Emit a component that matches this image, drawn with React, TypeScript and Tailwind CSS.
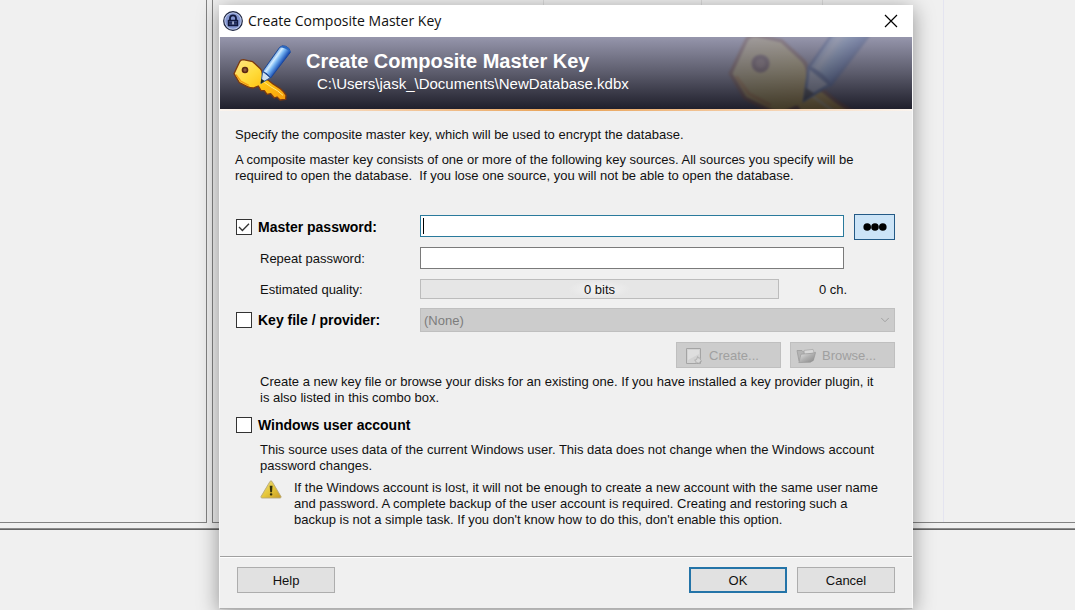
import { useId, useState } from "react";
import type { ReactNode } from "react";
import clsx from "clsx";
import { ChevronDown } from "lucide-react";

const buttonBase =
  "flex h-[26px] items-center justify-center border pt-px text-[13px] leading-4";

function KeyArt({ className }: { className?: string }) {
  const id = useId();
  return (
    <svg viewBox="96 126 180 180" className={className} aria-hidden="true">
      <defs>
        <linearGradient id={`${id}-gold`} x1="0" y1="0" x2="1" y2="1">
          <stop offset="0" stopColor="#ffe488" />
          <stop offset="0.35" stopColor="#ffdc3c" />
          <stop offset="0.6" stopColor="#ffc414" />
          <stop offset="1" stopColor="#f59a0a" />
        </linearGradient>
        <linearGradient
          id={`${id}-pen`}
          gradientUnits="userSpaceOnUse"
          x1="212"
          y1="176"
          x2="240"
          y2="196"
        >
          <stop offset="0" stopColor="#4f8fdc" />
          <stop offset="0.3" stopColor="#d4edff" />
          <stop offset="0.55" stopColor="#7ab8f4" />
          <stop offset="1" stopColor="#1c50b4" />
        </linearGradient>
      </defs>
      <path
        d="M102 221 L119 185 Q122 179 130 179 L158 185 L181 206 Q187 212 187 221 L189 236 L204 240 L219 252 L241 266 Q254 276 258 286 L257 298 L240 300 L231 291 L223 294 L212 281 L201 283 L193 272 L183 272 L175 258 L160 264 Q150 264 142 260 L118 248 Z"
        fill={`url(#${id}-gold)`}
        stroke="#7c3a10"
        strokeWidth="4"
        strokeLinejoin="round"
      />
      <path
        d="M192 246 L212 260 L232 272 L249 286"
        fill="none"
        stroke="#ffe880"
        strokeWidth="3"
      />
      <path d="M108 224 L122 243 L146 256" fill="none" stroke="#f29a12" strokeWidth="4" />
      <circle cx="135" cy="210" r="7.5" fill="#8c5a3c" stroke="#5a2812" strokeWidth="5" />
      <path d="M183 250 L188 214 L211 233 Z" fill="#cfe0ee" stroke="#2c5a9c" strokeWidth="3" />
      <path d="M182 251 L184 236 L194 243 Z" fill="#20281c" />
      <path
        d="M188 214 L239 142 Q246 134 258 139 Q271 145 271 157 L212 234 Q203 220 188 214 Z"
        fill={`url(#${id}-pen)`}
        stroke="#1d4796"
        strokeWidth="3"
        strokeLinejoin="round"
      />
      <path d="M239 142 Q246 134 258 139 Q271 145 271 157 Q258 143 239 142 Z" fill="#2c68c0" />
    </svg>
  );
}

function LockIcon() {
  return (
    <svg viewBox="0 0 20 20" className="size-5" aria-hidden="true">
      <circle cx="10" cy="10" r="9.3" fill="#c4d0f0" stroke="#1d2540" strokeWidth="1.2" />
      <circle cx="10" cy="10" r="7.8" fill="#8496d0" />
      <path d="M7 9.5V7.3a3 3 0 0 1 6 0v2.2" fill="none" stroke="#10183c" strokeWidth="1.8" />
      <rect x="4.8" y="8.8" width="10.4" height="6.4" rx="0.6" fill="#10183c" />
      <path d="M6 10.8h8M6 13h8" stroke="#5c70b2" strokeWidth="0.7" />
      <rect x="9.4" y="10.4" width="1.3" height="3" fill="#d8e0f8" />
    </svg>
  );
}

function WarningIcon() {
  return (
    <svg viewBox="0 0 22 19" className="h-[19px] w-[22px] shrink-0" aria-hidden="true">
      <defs>
        <linearGradient id="warn" x1="0" y1="0" x2="1" y2="1">
          <stop offset="0" stopColor="#e8dc8c" />
          <stop offset="0.5" stopColor="#e6c83c" />
          <stop offset="1" stopColor="#c89a20" />
        </linearGradient>
      </defs>
      <path
        d="M10 1.4Q11 0.2 12 1.4L21 16.6Q21.4 18 20 18H2Q0.6 18 1 16.6Z"
        fill="url(#warn)"
        stroke="#b8a878"
        strokeWidth="0.9"
      />
      <path d="M9.7 5.8h2.8l-.5 6.4h-1.8z" fill="#33300c" />
      <rect x="9.9" y="13.2" width="2.4" height="2.4" rx="0.8" fill="#33300c" />
    </svg>
  );
}

function NewFileIcon() {
  return (
    <svg viewBox="0 0 18 18" className="size-[18px]" aria-hidden="true">
      <path d="M1.5 1.5h14v15h-14z" fill="#d2d2d2" stroke="#a4a4a4" />
      <path d="M3 3h11v4L3 13z" fill="#dedede" />
      <path
        d="M12.6 9.6l1.1 1.6 2-.3-.4 1.9 1.5 1.3-1.9.7-.4 1.9-1.7-1-1.8.8.1-2-1.5-1.3 2-.6z"
        fill="#d8d8d8"
        stroke="#a6a6a6"
        strokeWidth="0.8"
      />
    </svg>
  );
}

function FolderIcon() {
  return (
    <svg viewBox="0 0 20 16" className="h-4 w-5" aria-hidden="true">
      <defs>
        <linearGradient id="folder" x1="0" y1="0" x2="1" y2="1">
          <stop offset="0.1" stopColor="#dcdcdc" />
          <stop offset="0.5" stopColor="#b0b0b0" />
          <stop offset="1" stopColor="#868686" />
        </linearGradient>
      </defs>
      <path d="M1 2.5h5l1 1.3h10V12l-14 1z" fill="#b4b4b4" stroke="#9c9c9c" strokeWidth="0.8" />
      <path d="M8 2.4l9-1 1.4 4-10 1z" fill="#d8d8d8" stroke="#a0a0a0" strokeWidth="0.6" />
      <path
        d="M5 6.2L15 5.4 19.6 4.4 17.4 12.4 14.4 14.2 2.8 14.6z"
        fill="url(#folder)"
        stroke="#949494"
        strokeWidth="0.6"
      />
    </svg>
  );
}

type SourceCheckboxProps = {
  id: string;
  children: ReactNode;
  defaultChecked?: boolean;
};

function SourceCheckbox({ id, children, defaultChecked = false }: SourceCheckboxProps) {
  const [checked, setChecked] = useState(defaultChecked);
  return (
    <label htmlFor={id} className="ml-px flex items-center gap-1.5 font-bold text-black">
      <span className="relative flex size-4">
        <input
          id={id}
          type="checkbox"
          checked={checked}
          onChange={(e) => setChecked(e.target.checked)}
          className="size-4 appearance-none border border-[#333333] bg-white"
        />
        {checked && (
          <svg viewBox="0 0 16 16" className="pointer-events-none absolute inset-0 size-4">
            <path d="M3 8l3.4 3.5L13 4.8" fill="none" stroke="#333" strokeWidth="1.3" />
          </svg>
        )}
      </span>
      <span className="text-[14px] leading-4">{children}</span>
    </label>
  );
}

/* The database window behind the dialog */
function MainWindow() {
  return (
    <div className="flex min-h-screen flex-col bg-[#f0f0f0]">
      <div className="flex h-[523px] gap-[5px]">
        <div className="w-[207px] border-r border-b border-[#828282]" />
        <div className="flex flex-1 border-b border-l border-[#828282]">
          <div className="w-[331px] border-r border-[#dcdcdc]" />
          <div className="w-[158px] border-r border-[#dcdcdc]" />
          <div className="w-[121px] border-r border-[#dcdcdc]" />
          <div className="w-[121px] border-r border-[#e4e4f0]" />
        </div>
      </div>
      <div className="mt-[5px] h-0.5 border-t border-b border-t-[#8c8c8c] border-b-[#646464]" />
    </div>
  );
}

export default function App() {
  return (
    <div className="relative overflow-hidden font-['Liberation_Sans',Arial,sans-serif] text-[13px] leading-4 text-[#111]">
      <MainWindow />
      <div className="absolute inset-0 pt-[5px] pr-[162px] pl-[219px]">
        <section
          role="dialog"
          aria-labelledby="dialog-title"
          className="border-x border-b border-x-[#f8f8f8] border-b-[#b0b0b0] bg-[#f0f0f0] shadow-[0_4px_20px_rgba(0,0,0,0.4)]"
        >
          <header className="-mx-px flex h-8 items-center gap-[5px] bg-white pr-3.5 pl-1">
            <LockIcon />
            <h1
              id="dialog-title"
              className="flex-1 font-['Open_Sans','Segoe_UI',sans-serif] text-[14px] leading-5"
            >
              Create Composite Master Key
            </h1>
            <button type="button" aria-label="Close" className="flex size-4 items-center justify-center">
              <svg viewBox="0 0 14 14" className="size-3.5">
                <path d="M1 1l12 12M13 1L1 13" stroke="#000" strokeWidth="1.2" />
              </svg>
            </button>
          </header>

          <div className="relative flex h-[72px] gap-3.5 overflow-hidden bg-linear-to-b from-[#9696ac] via-[#5c5c6c] to-[#20202c] pt-[5px] pl-3 text-white">
            <KeyArt className="absolute -top-[50px] right-[23px] size-[164px] opacity-20 blur-[1px] brightness-80" />
            <KeyArt className="size-[60px]" />
            <div className="pt-[7px]">
              <h2 className="text-[20px] leading-6 font-bold">Create Composite Master Key</h2>
              <p className="ml-[11px] text-[15px] leading-[22px]">
                C:\Users\jask_\Documents\NewDatabase.kdbx
              </p>
            </div>
          </div>
          <div className="h-0.5 bg-linear-to-r from-[#fbf4ee] via-[#e8a050] to-[#fbf4ee]" />

          <form onSubmit={(e) => e.preventDefault()}>
            <div className="pt-4 pr-[17px] pb-7 pl-[15px]">
              <p>
                Specify the composite master key, which will be used to encrypt the database.
              </p>
              <p className="mt-[9px]">
                A composite master key consists of one or more of the following key sources.
                All sources you specify will be
                <br />
                required to open the database.&nbsp; If you lose one source, you will not be able
                to open the database.
              </p>

              <div className="mt-[30px] flex">
                <div className="flex w-[185px] items-center">
                  <SourceCheckbox id="use-password" defaultChecked>
                    Master password:
                  </SourceCheckbox>
                </div>
                <div className="relative mr-2.5 flex-1 pt-px">
                  <input
                    type="password"
                    aria-label="Master password"
                    className="h-[22px] w-full border border-[#2a7a9c] bg-white px-1 outline-none"
                  />
                  <span className="absolute top-1 left-[3px] h-4 w-px bg-black" />
                </div>
                <button
                  type="button"
                  aria-label="Show password"
                  className="flex h-[26px] w-[41px] items-center justify-center border border-[#245a86] bg-[#cce4f7]"
                >
                  <svg viewBox="0 0 24 8" className="h-2 w-6">
                    <circle cx="4.2" cy="4" r="3.8" />
                    <circle cx="12" cy="4" r="3.8" />
                    <circle cx="19.8" cy="4" r="3.8" />
                  </svg>
                </button>
              </div>

              <div className="mt-[7px] flex items-center">
                <label htmlFor="repeat" className="w-[185px] pt-0.5 pl-[25px]">
                  Repeat password:
                </label>
                <input
                  id="repeat"
                  type="password"
                  className="mr-[51px] h-[22px] flex-1 border border-[#7a7a7a] bg-white px-1"
                />
              </div>

              <div className="mt-2.5 flex items-center">
                <span id="quality" className="w-[185px] pt-0.5 pl-[25px]">
                  Estimated quality:
                </span>
                <div
                  role="progressbar"
                  aria-labelledby="quality"
                  aria-valuenow={0}
                  className="flex h-5 flex-1 items-center justify-center border border-[#bcbcbc] bg-[#e6e6e6]"
                >
                  <span className="bg-radial from-[#f4f4f4] to-[#e6e6e6] to-70% px-4 pt-0.5">
                    0 bits
                  </span>
                </div>
                <span className="w-[116px] pt-0.5 pl-10">0 ch.</span>
              </div>

              <div className="mt-[9px] flex">
                <div className="flex w-[185px] items-center">
                  <SourceCheckbox id="use-keyfile">Key file / provider:</SourceCheckbox>
                </div>
                <div className="relative flex-1">
                  <select
                    disabled
                    aria-label="Key file / provider"
                    className="block h-6 w-full appearance-none border border-[#bfbfbf] bg-[#cccccc] px-[3px] pt-0.5 text-[13px] text-[#7c7c7c] opacity-100"
                  >
                    <option>(None)</option>
                  </select>
                  <ChevronDown
                    className="pointer-events-none absolute top-[5px] right-[3px] size-3.5 text-[#9a9a9a]"
                    strokeWidth={1.5}
                  />
                </div>
              </div>

              <div className="mt-2.5 flex justify-end gap-[9px]">
                <button
                  type="button"
                  disabled
                  className={clsx(buttonBase, "w-[105px] justify-start gap-1.5 border-[#bfbfbf] bg-[#cccccc] pl-2 text-[#a0a0a0]")}
                >
                  <NewFileIcon />
                  Create...
                </button>
                <button
                  type="button"
                  disabled
                  className={clsx(buttonBase, "w-[105px] justify-start gap-1.5 border-[#bfbfbf] bg-[#cccccc] pl-[5px] text-[#a0a0a0]")}
                >
                  <FolderIcon />
                  Browse...
                </button>
              </div>

              <p className="mt-1.5 ml-[25px]">
                Create a new key file or browse your disks for an existing one. If you have
                installed a key provider plugin, it
                <br />
                is also listed in this combo box.
              </p>

              <div className="mt-[11px] flex">
                <SourceCheckbox id="use-account">Windows user account</SourceCheckbox>
              </div>

              <div className="mt-[9px] ml-[25px]">
                <p>
                  This source uses data of the current Windows user. This data does not change
                  when the Windows account
                  <br />
                  password changes.
                </p>
                <div className="mt-1.5 flex gap-3">
                  <WarningIcon />
                  <p>
                    If the Windows account is lost, it will not be enough to create a new account
                    with the same user name
                    <br />
                    and password. A complete backup of the user account is required. Creating and
                    restoring such a
                    <br />
                    backup is not a simple task. If you don't know how to do this, don't enable
                    this option.
                  </p>
                </div>
              </div>
            </div>

            <footer className="flex gap-2.5 border-t border-[#a0a0a0] pt-2.5 pr-[17px] pb-[15px] pl-[17px] shadow-[inset_0_1px_0_#ffffff]">
              <button type="button" className={clsx(buttonBase, "mr-auto w-[98px] border-[#adadad] bg-[#e1e1e1]")}>
                Help
              </button>
              <button type="submit" className={clsx(buttonBase, "w-[98px] border-2 border-[#2474a8] bg-[#e1e1e1]")}>
                OK
              </button>
              <button type="button" className={clsx(buttonBase, "w-[98px] border-[#adadad] bg-[#e1e1e1]")}>
                Cancel
              </button>
            </footer>
          </form>
        </section>
      </div>
    </div>
  );
}
